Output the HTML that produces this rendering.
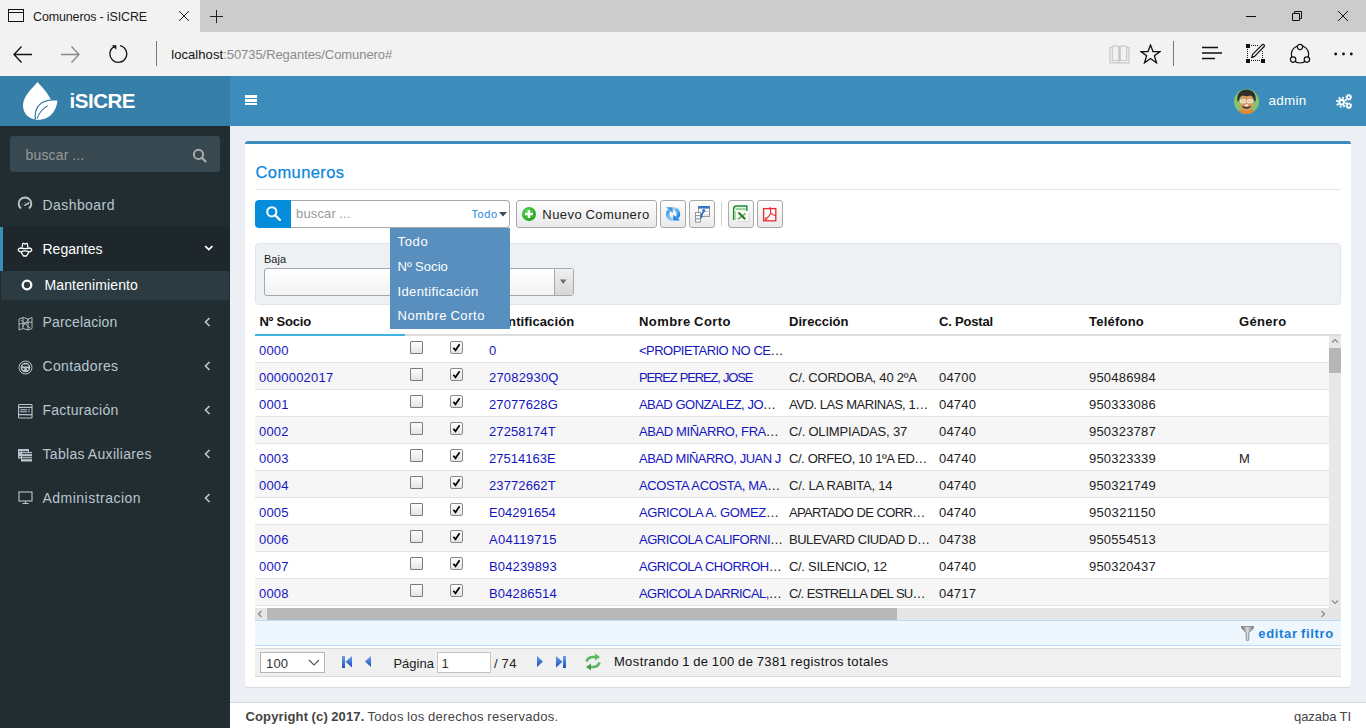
<!DOCTYPE html>
<html><head><meta charset="utf-8"><title>Comuneros - iSICRE</title><style>
*{box-sizing:border-box;margin:0;padding:0}
html,body{width:1366px;height:728px;overflow:hidden;font-family:"Liberation Sans",sans-serif;background:#ecf0f5;position:relative}
.a{position:absolute}
.t{position:absolute;white-space:nowrap}
svg{display:block;position:absolute}
.cb{position:absolute;width:13px;height:13px;border:1px solid #8a8a8a;border-radius:2px;background:linear-gradient(#fdfdfd,#e4e4e4)}
.btn{position:absolute;height:28px;top:200px;border:1px solid #a9a9a9;border-radius:3px;background:linear-gradient(#fefefe,#e9e9e9)}
</style></head><body>
<div class="a" style="left:0;top:0;width:1366px;height:32px;background:#cccccc"></div>
<div class="a" style="left:0;top:0;width:200px;height:32px;background:#f2f2f2"></div>
<div class="a" style="left:0;top:32px;width:1366px;height:44px;background:#f2f2f2"></div>
<div class="a" style="left:8px;top:9px;width:16px;height:13px;border:1.3px solid #111"></div>
<div class="a" style="left:8px;top:12px;width:16px;height:1.3px;background:#111"></div>
<svg style="left:179px;top:11px" width="10" height="10" viewBox="0 0 10 10"><path d="M0 0L10 10M10 0L0 10" stroke="#222" stroke-width="1"/></svg>
<div class="a" style="left:216px;top:10px;width:1px;height:13px;background:#222"></div><div class="a" style="left:210px;top:16px;width:13px;height:1px;background:#222"></div>
<div class="a" style="left:1246px;top:16px;width:10px;height:1px;background:#111"></div>
<svg style="left:1292px;top:11px" width="10" height="10" viewBox="0 0 10 10"><path d="M0.5 2.5H7.5V9.5H0.5Z M2.5 2.5V0.5H9.5V7.5H7.5" fill="none" stroke="#111" stroke-width="1"/></svg>
<svg style="left:1338px;top:11px" width="10" height="10" viewBox="0 0 10 10"><path d="M0 0L10 10M10 0L0 10" stroke="#111" stroke-width="1"/></svg>
<svg style="left:13px;top:46px" width="19" height="17" viewBox="0 0 19 17"><path d="M8.5 0.5L1 8.5L8.5 16.5M1 8.5H19" fill="none" stroke="#111" stroke-width="1.3"/></svg>
<svg style="left:61px;top:46px" width="19" height="17" viewBox="0 0 19 17"><path d="M10.5 0.5L18 8.5L10.5 16.5M0 8.5H18" fill="none" stroke="#888" stroke-width="1.3"/></svg>
<svg style="left:108px;top:44px" width="20" height="20" viewBox="0 0 20 20"><path d="M12 1.7A8.4 8.4 0 1 1 6.2 2.6" fill="none" stroke="#111" stroke-width="1.3"/><path d="M3.8 1.2H8.3V5.7Z" fill="#111"/></svg>
<div class="a" style="left:156px;top:41px;width:1px;height:25px;background:#777"></div>
<svg style="left:1109px;top:45px" width="21" height="19" viewBox="0 0 21 19"><g fill="none" stroke="#c9c9c9" stroke-width="1.2"><path d="M0.9 2.6V17.8H20V2.6H18.2"/><path d="M0.9 2.6H2.9"/><path d="M3.3 15.5V1.3Q6.5 0.6 9.8 1.3V15.5Z"/><path d="M11.2 15.5V1.3Q14.5 0.6 17.7 1.3V15.5Z"/><path d="M10.5 1.5V18"/></g></svg>
<svg style="left:1140px;top:44px" width="21" height="20" viewBox="0 0 21 20"><path d="M10.5 1L13 7.6H20L14.4 11.8L16.5 18.8L10.5 14.5L4.5 18.8L6.6 11.8L1 7.6H8Z" fill="none" stroke="#111" stroke-width="1.3"/></svg>
<div class="a" style="left:1173px;top:41px;width:1px;height:25px;background:#777"></div>
<svg style="left:1201px;top:46px" width="22" height="14" viewBox="0 0 22 14"><path d="M1 1.5H17M1 7H21M1 12.5H14" stroke="#111" stroke-width="1.3"/></svg>
<svg style="left:1245px;top:43px" width="22" height="21" viewBox="0 0 22 21"><g fill="#111"><rect x="1" y="1" width="4" height="4"/><rect x="1" y="16" width="4" height="4"/><rect x="16" y="16" width="4" height="4"/></g><g stroke="#111" stroke-width="1" stroke-dasharray="1 1"><path d="M6 2.5H13.5"/><path d="M2.5 6V15"/><path d="M6 17.5H15"/><path d="M17.5 8V15"/></g><path d="M6.6 14.6L7.6 11.4L17.3 1.7Q18.3 1 19.1 1.8Q19.9 2.6 19.2 3.5L9.6 13.4Z" fill="none" stroke="#111" stroke-width="1.2" stroke-linejoin="round"/></svg>
<svg style="left:1289px;top:43px" width="22" height="21" viewBox="0 0 22 21"><circle cx="11" cy="11.3" r="8.7" fill="none" stroke="#111" stroke-width="1.2"/><circle cx="11" cy="4" r="2.7" fill="#f2f2f2" stroke="#111" stroke-width="1.2"/><circle cx="4.1" cy="16.6" r="2.7" fill="#f2f2f2" stroke="#111" stroke-width="1.2"/><circle cx="17.9" cy="16.6" r="2.7" fill="#f2f2f2" stroke="#111" stroke-width="1.2"/></svg>
<svg style="left:1334px;top:52px" width="19" height="4"><circle cx="1.7" cy="2" r="1.4" fill="#111"/><circle cx="9.5" cy="2" r="1.4" fill="#111"/><circle cx="17.3" cy="2" r="1.4" fill="#111"/></svg>
<div class="t" style="left:33.00px;top:11.12px;font-size:12.5px;line-height:12.5px;color:#1a1a1a;letter-spacing:-0.141px;word-spacing:-0.084px">Comuneros - iSICRE</div>
<div class="t" style="left:171.20px;top:47.50px;font-size:13px;line-height:13px;color:#111;letter-spacing:0.076px">localhost</div>
<div class="t" style="left:223.20px;top:47.50px;font-size:13px;line-height:13px;color:#8a8a8a;letter-spacing:-0.062px">:50735/Regantes/Comunero#</div>
<div class="a" style="left:0;top:76px;width:230px;height:50px;background:#367fa9"></div>
<div class="a" style="left:230px;top:76px;width:1136px;height:50px;background:#3c8dbc"></div>
<svg style="left:18px;top:78px" width="44" height="44" viewBox="0 0 44 44">
<path d="M19.5 4C15 9.5 5 18 5 27.5C5 36 11.5 41.5 19 41.5L25 38L33 22C30 15 24 9 19.5 4Z" fill="#fff"/>
<path d="M17.8 41.8C16.8 33 20.5 24.3 30.5 22.5L39.3 22.5C39 31 33 41.8 20 41.8Z" fill="#fff"/>
<path d="M17.4 41.5C16.3 32.5 19.8 24.2 30.3 22.3L33 22.1" fill="none" stroke="#367fa9" stroke-width="1.3"/>
<path d="M19 40.8C21.5 34 25 30 29.8 27.8" fill="none" stroke="#367fa9" stroke-width="1.1"/>
</svg>
<div class="a" style="left:245px;top:95.3px;width:11.5px;height:2.6px;background:#fff"></div>
<div class="a" style="left:245px;top:99.1px;width:11.5px;height:2.6px;background:#fff"></div>
<div class="a" style="left:245px;top:102.8px;width:11.5px;height:2.6px;background:#fff"></div>
<svg style="left:1234px;top:89px" width="25" height="25" viewBox="0 0 25 25">
<defs><clipPath id="cc"><circle cx="12.5" cy="12.5" r="12.5"/></clipPath></defs>
<g clip-path="url(#cc)">
<rect width="25" height="25" fill="#86c46a"/>
<path d="M2 25Q3 20.5 12.5 20Q22 20.5 23 25Z" fill="#e8862e"/>
<ellipse cx="12.5" cy="13.5" rx="7" ry="8.5" fill="#d49b63"/>
<path d="M3.5 13Q2 1 12.5 0.5Q23 1 21.5 13L19.8 11Q19.5 7 16 6.5Q12.5 8 9 6.5Q5.5 7 5.2 11Z" fill="#2e2e2e"/>
<rect x="6.5" y="10.8" width="5" height="3" rx="0.6" fill="#e9c9a0" stroke="#f4f4f4" stroke-width="0.9"/>
<rect x="13.5" y="10.8" width="5" height="3" rx="0.6" fill="#e9c9a0" stroke="#f4f4f4" stroke-width="0.9"/>
<path d="M8.5 17.5Q12.5 20.5 16.5 17.5" stroke="#2a2a2a" stroke-width="1.4" fill="none"/>
<rect x="11.3" y="15.5" width="2.4" height="1.6" fill="#fff"/>
</g></svg>
<svg style="left:1336px;top:94px" width="16" height="15" viewBox="0 0 16 15">
<circle cx="5.6" cy="8.2" r="3.4" fill="#fff"/>
<circle cx="5.6" cy="8.2" r="4.6" fill="none" stroke="#fff" stroke-width="2" stroke-dasharray="1.8 1.8"/>
<circle cx="5.6" cy="8.2" r="1.3" fill="#3c8dbc"/>
<circle cx="12.8" cy="3.3" r="1.9" fill="none" stroke="#fff" stroke-width="1.6"/>
<circle cx="12.8" cy="3.3" r="2.7" fill="none" stroke="#fff" stroke-width="1.2" stroke-dasharray="1.1 1"/>
<circle cx="12.8" cy="11.7" r="1.9" fill="none" stroke="#fff" stroke-width="1.6"/>
<circle cx="12.8" cy="11.7" r="2.7" fill="none" stroke="#fff" stroke-width="1.2" stroke-dasharray="1.1 1"/>
</svg>
<div class="t" style="left:69.50px;top:90.65px;font-size:20.5px;line-height:20.5px;color:#fff;font-weight:bold;letter-spacing:-0.477px">iSICRE</div>
<div class="t" style="left:1268.50px;top:94.17px;font-size:13.5px;line-height:13.5px;color:#fff;letter-spacing:0.244px">admin</div>
<div class="a" style="left:0;top:126px;width:230px;height:602px;background:#222d32"></div>
<div class="a" style="left:10px;top:136px;width:210px;height:36px;background:#374850;border-radius:3px"></div>
<svg style="left:190px;top:146px" width="18" height="18" viewBox="0 0 18 18"><circle cx="8.5" cy="8.4" r="4.6" fill="none" stroke="#aaa" stroke-width="2"/><path d="M11.8 11.8L15.6 15.4" stroke="#aaa" stroke-width="2.2" stroke-linecap="round"/></svg>
<svg style="left:17px;top:196px" width="16" height="16" viewBox="0 0 16 16"><path d="M4 12.6A6.3 6.3 0 1 1 12 12.6" fill="none" stroke="#b8c7ce" stroke-width="1.9"/><path d="M8 6.2V7M4.8 8.4H5.6M10.6 8.4H11.4" stroke="#b8c7ce" stroke-width="0.8"/><path d="M7.8 9.3L11.8 6.8" stroke="#b8c7ce" stroke-width="1.5" stroke-linecap="round"/></svg>
<div class="a" style="left:0;top:227px;width:230px;height:44px;background:#1e282c"></div>
<div class="a" style="left:0;top:227px;width:3px;height:44px;background:#3c8dbc"></div>
<svg style="left:17px;top:241px" width="16" height="16" viewBox="0 0 16 16"><g fill="none" stroke="#fff" stroke-width="1.3" stroke-linejoin="round"><path d="M5.2 6.5L5.6 3Q6.2 1.8 7.2 2.6L8 3.2L8.8 2.6Q9.8 1.8 10.4 3L10.8 6.5"/><path d="M3.5 7Q1 7.5 1.3 9.2Q1.8 10.8 4 10.8L6.5 15H9.5L12 10.8Q14.2 10.8 14.7 9.2Q15 7.5 12.5 7Q8 8.2 3.5 7Z"/><path d="M4 10.8Q8 9 12 10.8"/></g></svg>
<svg style="left:203.5px;top:244.5px" width="10" height="7" viewBox="0 0 10 7"><path d="M1.2 1.2L4.8 4.6L8.4 1.2" fill="none" stroke="#fff" stroke-width="1.8"/></svg>
<div class="a" style="left:1px;top:271px;width:228px;height:29px;background:#2c3b41"></div>
<svg style="left:20px;top:278px" width="14" height="14" viewBox="0 0 14 14"><circle cx="7" cy="7" r="4.3" fill="none" stroke="#fff" stroke-width="2.3"/></svg>
<div class="t" style="left:25.50px;top:147.85px;font-size:14px;line-height:14px;color:#999;letter-spacing:0.165px;word-spacing:-0.417px">buscar ...</div>
<div class="t" style="left:42.50px;top:197.85px;font-size:14px;line-height:14px;color:#b8c7ce;letter-spacing:0.431px">Dashboard</div>
<div class="t" style="left:42.50px;top:241.85px;font-size:14px;line-height:14px;color:#fff;letter-spacing:0.012px">Regantes</div>
<div class="t" style="left:44.50px;top:278.15px;font-size:14px;line-height:14px;color:#fff;letter-spacing:0.129px">Mantenimiento</div>
<svg style="left:17.5px;top:316px" width="15" height="15" viewBox="0 0 15 15"><path d="M1 3L5 1.5L10 3L14 1.5V12.5L10 14L5 12.5L1 14Z M5 1.5V12.5M10 3V14 M1 8L14 6 M3 4L12 12 M11 3L4 11" fill="none" stroke="#b8c7ce" stroke-width="0.9"/></svg><svg style="left:204px;top:316.5px" width="7" height="10" viewBox="0 0 7 10"><path d="M5.5 1L1.5 5L5.5 9" fill="none" stroke="#b8c7ce" stroke-width="1.7"/></svg>
<div class="t" style="left:42.50px;top:314.95px;font-size:14px;line-height:14px;color:#b8c7ce;letter-spacing:0.170px">Parcelacion</div>
<svg style="left:17.5px;top:360px" width="15" height="15" viewBox="0 0 15 15"><circle cx="7.5" cy="7.5" r="6.5" fill="none" stroke="#b8c7ce" stroke-width="1"/><circle cx="7.5" cy="7.5" r="4.8" fill="#b8c7ce"/><rect x="4.5" y="4.5" width="6" height="2" fill="#222d32"/><circle cx="5.5" cy="9" r="1" fill="#222d32"/><circle cx="9.5" cy="9" r="1" fill="#222d32"/></svg><svg style="left:204px;top:360.5px" width="7" height="10" viewBox="0 0 7 10"><path d="M5.5 1L1.5 5L5.5 9" fill="none" stroke="#b8c7ce" stroke-width="1.7"/></svg>
<div class="t" style="left:42.50px;top:358.95px;font-size:14px;line-height:14px;color:#b8c7ce;letter-spacing:0.350px">Contadores</div>
<svg style="left:17.5px;top:404px" width="15" height="15" viewBox="0 0 15 15"><rect x="0.6" y="0.5" width="13.4" height="13.5" rx="0.8" fill="none" stroke="#b8c7ce" stroke-width="1.1"/><path d="M0.6 3.4H14M0.6 10.6H9.5Q10.5 11.5 11.5 10.6H14M2.2 5.7H9.2M10.2 5.7H11.8M2.2 7.7H9.2M10.2 7.7H11.8" stroke="#b8c7ce" stroke-width="1.1"/></svg><svg style="left:204px;top:404.5px" width="7" height="10" viewBox="0 0 7 10"><path d="M5.5 1L1.5 5L5.5 9" fill="none" stroke="#b8c7ce" stroke-width="1.7"/></svg>
<div class="t" style="left:42.50px;top:402.95px;font-size:14px;line-height:14px;color:#b8c7ce;letter-spacing:0.256px">Facturación</div>
<svg style="left:17.5px;top:449px" width="15" height="15" viewBox="0 0 15 15"><rect x="0" y="0" width="11" height="9.5" fill="#b8c7ce"/><rect x="3" y="3" width="11" height="9.5" fill="#b8c7ce"/><path d="M1.2 2.6H2.9M4.1 2.6H9.9M1.2 7.7H2.9M4.1 4.6H14M4.1 7.7H14M4.1 9.7H14" stroke="#222d32" stroke-width="0.9"/><path d="M11 3V0M3 9.5V12.5" stroke="#222d32" stroke-width="0"/></svg><svg style="left:204px;top:448.5px" width="7" height="10" viewBox="0 0 7 10"><path d="M5.5 1L1.5 5L5.5 9" fill="none" stroke="#b8c7ce" stroke-width="1.7"/></svg>
<div class="t" style="left:42.50px;top:446.95px;font-size:14px;line-height:14px;color:#b8c7ce;letter-spacing:0.326px;word-spacing:-0.578px">Tablas Auxiliares</div>
<svg style="left:17.5px;top:490.5px" width="15" height="15" viewBox="0 0 15 15"><rect x="1" y="1" width="13" height="9" fill="none" stroke="#b8c7ce" stroke-width="1.1"/><path d="M7.5 10V12M4.5 12.5H10.5" stroke="#b8c7ce" stroke-width="1.1"/></svg><svg style="left:204px;top:492.5px" width="7" height="10" viewBox="0 0 7 10"><path d="M5.5 1L1.5 5L5.5 9" fill="none" stroke="#b8c7ce" stroke-width="1.7"/></svg>
<div class="t" style="left:42.50px;top:490.95px;font-size:14px;line-height:14px;color:#b8c7ce;letter-spacing:0.477px">Administracion</div>
<div class="a" style="left:245px;top:141px;width:1106px;height:546px;background:#fff;border-top:3px solid #3c8dbc;border-radius:3px;box-shadow:0 1px 1px rgba(0,0,0,.1)"></div>
<div class="a" style="left:255px;top:189px;width:1086px;height:1px;background:#e6e6e6"></div>
<div class="t" style="left:255.50px;top:164.03px;font-size:16.5px;line-height:16.5px;color:#0c87db;letter-spacing:0.411px;-webkit-text-stroke:0.25px #0c87db">Comuneros</div>
<div class="a" style="left:291px;top:200px;width:219px;height:28px;background:#fff;border:1px solid #a8a8a8;border-left:0;border-radius:0 4px 4px 0"></div>
<div class="a" style="left:255px;top:200px;width:36px;height:28px;background:#048dda;border-radius:4px 0 0 4px"></div>
<svg style="left:265px;top:205px" width="17" height="17" viewBox="0 0 17 17"><circle cx="6.8" cy="6.8" r="4.6" fill="none" stroke="#fff" stroke-width="2"/><path d="M10 10L14.8 14.8" stroke="#fff" stroke-width="2.4" stroke-linecap="round"/></svg>
<svg style="left:499px;top:212px" width="8" height="5" viewBox="0 0 8 5"><path d="M0 0H8L4 4.5Z" fill="#3d4a5a"/></svg>
<div class="t" style="left:296.00px;top:207.10px;font-size:13px;line-height:13px;color:#9a9a9a;letter-spacing:0.155px;word-spacing:-0.389px">buscar ...</div>
<div class="t" style="left:471.50px;top:208.69px;font-size:11px;line-height:11px;color:#1a8ae0;letter-spacing:0.572px">Todo</div>
<div class="btn" style="left:516px;width:141px"></div>
<svg style="left:521px;top:206px" width="16" height="16" viewBox="0 0 16 16"><defs><radialGradient id="gg" cx="0.4" cy="0.35" r="0.7"><stop offset="0" stop-color="#5fd85f"/><stop offset="1" stop-color="#17a417"/></radialGradient></defs><circle cx="8" cy="8" r="7" fill="url(#gg)"/><path d="M8 4V12M4 8H12" stroke="#fff" stroke-width="2.4"/></svg>
<div class="btn" style="left:660px;width:26px"></div>
<div class="btn" style="left:689px;width:26px"></div>
<div class="a" style="left:721px;top:202px;width:1px;height:24px;background:#d0d0d0"></div>
<div class="btn" style="left:728px;width:26px"></div>
<div class="btn" style="left:757px;width:26px"></div>
<svg style="left:662px;top:203px" width="22" height="22" viewBox="0 0 22 22"><defs><linearGradient id="rl" x1="0" y1="0" x2="1" y2="1"><stop offset="0" stop-color="#3f9be6"/><stop offset=".5" stop-color="#7cc4f0"/><stop offset="1" stop-color="#9ad3f5"/></linearGradient><linearGradient id="rr" x1="0" y1="0" x2="1" y2="1"><stop offset="0" stop-color="#a8d8f5"/><stop offset=".6" stop-color="#4aa8ec"/><stop offset="1" stop-color="#1a86e6"/></linearGradient></defs>
<path d="M10.8 16.6A5.4 5.4 0 0 1 7.3 7.4" fill="none" stroke="url(#rl)" stroke-width="3.4"/><path d="M4 4.2H10.8V10Z" fill="#3d97e2"/>
<path d="M11.3 5.6A5.4 5.4 0 0 1 14.9 14.7" fill="none" stroke="url(#rr)" stroke-width="3.4"/><path d="M11.2 11.8V17.6H18Z" fill="#1f88e4"/></svg>
<svg style="left:694px;top:205px" width="17" height="18" viewBox="0 0 17 18"><rect x="4.5" y="1.5" width="11" height="10" fill="#fff" stroke="#999"/><rect x="4" y="1" width="12" height="2.6" fill="#3a78c6"/><path d="M10 10H15M12 6.5H15" stroke="#bbb" stroke-width="0.8"/><g fill="#fff" stroke="#8d8d8d" stroke-width="0.9"><rect x="1.5" y="7.5" width="5" height="3.2"/><rect x="1.5" y="10.7" width="5" height="3.2"/><rect x="1.5" y="13.9" width="5" height="3.2"/></g><path d="M7.2 13.2Q7.6 8.2 9.8 6.6" fill="none" stroke="#2f6fbd" stroke-width="1.9"/><path d="M7.6 5.8L10.2 3.4L12 7.2Z" fill="#2f6fbd"/></svg>
<svg style="left:732px;top:205px" width="19" height="18" viewBox="0 0 19 18"><path d="M1.6 15V4.2Q1.6 1.2 4.6 1H14.8V6" fill="none" stroke="#1d8a2c" stroke-width="1.4"/><rect x="3.6" y="2.8" width="10" height="2.3" fill="#9fd49f"/><path d="M3.2 15V6" stroke="#7fc47f" stroke-width="0.8"/><rect x="5.5" y="7" width="12" height="10" fill="#d8d8d8"/><rect x="4.5" y="6" width="12" height="10" fill="#fdfdfd"/><path d="M5.8 14.3L13.5 8.5" stroke="#6cc06c" stroke-width="2"/><path d="M6.5 7.5L13.2 14.3" stroke="#2a7d1f" stroke-width="2.2"/></svg>
<svg style="left:761px;top:205px" width="18" height="18" viewBox="0 0 18 18"><rect x="2.6" y="3.6" width="12.2" height="12.2" fill="#f6fafa" stroke="#e8282c" stroke-width="1.3"/><circle cx="9.2" cy="3.3" r="1.1" fill="#e8262a"/><path d="M9.2 3.5Q9.3 6 10 8Q11 10 14.6 10.6M9.9 8Q8.2 12 4.4 14.2" fill="none" stroke="#ea2a2e" stroke-width="1.1"/><circle cx="4.8" cy="13.8" r="1" fill="none" stroke="#ea2a2e" stroke-width="0.9"/></svg>
<div class="t" style="left:542.30px;top:208.10px;font-size:13px;line-height:13px;color:#222;letter-spacing:0.440px;word-spacing:-0.674px">Nuevo Comunero</div>
<div class="a" style="left:255px;top:243px;width:1086px;height:62px;background:#eef1f4;border:1px solid #e1e5ea;border-radius:4px"></div>
<div class="a" style="left:264px;top:268px;width:310px;height:28px;background:linear-gradient(#fff,#f3f3f3);border:1px solid #a8a8a8;border-radius:3px"></div>
<div class="a" style="left:554px;top:269px;width:19px;height:26px;background:linear-gradient(#f0f0f0,#d6d6d6);border-left:1px solid #a8a8a8;border-radius:0 2px 2px 0"></div>
<svg style="left:560px;top:279px" width="7" height="6" viewBox="0 0 7 6"><path d="M0 0.5H6.5L3.25 5Z" fill="#707070"/></svg>
<div class="t" style="left:264.00px;top:253.69px;font-size:11px;line-height:11px;color:#222;letter-spacing:0.028px">Baja</div>
<div class="a" style="left:255px;top:334px;width:1086px;height:2px;background:#dcdcdc"></div>
<div class="a" style="left:255px;top:334px;width:150px;height:2px;background:#3fb2e2"></div>
<div class="t" style="left:259.40px;top:315.00px;font-size:13px;line-height:13px;color:#111;font-weight:bold;letter-spacing:-0.203px;word-spacing:-0.031px">Nº Socio</div>
<div class="t" style="left:489.00px;top:315.00px;font-size:13px;line-height:13px;color:#111;font-weight:bold;letter-spacing:0.102px">Identificación</div>
<div class="t" style="left:639.00px;top:315.00px;font-size:13px;line-height:13px;color:#111;font-weight:bold;letter-spacing:0.428px;word-spacing:-0.662px">Nombre Corto</div>
<div class="t" style="left:789.00px;top:315.00px;font-size:13px;line-height:13px;color:#111;font-weight:bold;letter-spacing:0.028px">Dirección</div>
<div class="t" style="left:939.00px;top:315.00px;font-size:13px;line-height:13px;color:#111;font-weight:bold;letter-spacing:-0.174px;word-spacing:-0.060px">C. Postal</div>
<div class="t" style="left:1089.00px;top:315.00px;font-size:13px;line-height:13px;color:#111;font-weight:bold;letter-spacing:0.225px">Teléfono</div>
<div class="t" style="left:1239.00px;top:315.00px;font-size:13px;line-height:13px;color:#111;font-weight:bold;letter-spacing:0.322px">Género</div>
<div class="a" style="left:255px;top:336px;width:1074px;height:27px;background:#fff;border-bottom:1px solid #e3e3e3"></div>
<div class="cb" style="left:410px;top:341px;border-radius:1px;border-color:#7a7a7a"></div><div class="cb" style="left:450px;top:341px"></div><svg style="left:451px;top:342px" width="11" height="11" viewBox="0 0 11 11"><path d="M2.4 5.8L4.5 8.3L8.6 2.2" fill="none" stroke="#000" stroke-width="1.7"/></svg>
<div class="t" style="left:259.00px;top:343.50px;font-size:13px;line-height:13px;color:#1515c0;letter-spacing:0.203px">0000</div>
<div class="t" style="left:489.00px;top:343.50px;font-size:13px;line-height:13px;color:#1515c0;letter-spacing:0.199px">0</div>
<div class="t" style="left:639.00px;top:343.50px;font-size:13px;line-height:13px;color:#1515c0;letter-spacing:-0.522px;word-spacing:0.288px">&lt;PROPIETARIO NO CE</div>
<div class="t" style="left:770.45px;top:343.50px;font-size:13px;line-height:13px;color:#222;letter-spacing:-2.603px">…</div>
<div class="a" style="left:255px;top:363px;width:1074px;height:27px;background:#f6f6f6;border-bottom:1px solid #e3e3e3"></div>
<div class="cb" style="left:410px;top:368px;border-radius:1px;border-color:#7a7a7a"></div><div class="cb" style="left:450px;top:368px"></div><svg style="left:451px;top:369px" width="11" height="11" viewBox="0 0 11 11"><path d="M2.4 5.8L4.5 8.3L8.6 2.2" fill="none" stroke="#000" stroke-width="1.7"/></svg>
<div class="t" style="left:259.00px;top:370.50px;font-size:13px;line-height:13px;color:#1515c0;letter-spacing:0.202px">0000002017</div>
<div class="t" style="left:489.00px;top:370.50px;font-size:13px;line-height:13px;color:#1515c0;letter-spacing:0.182px">27082930Q</div>
<div class="t" style="left:639.00px;top:370.50px;font-size:13px;line-height:13px;color:#1515c0;letter-spacing:-1.193px;word-spacing:0.959px">PEREZ PEREZ, JOSE</div>
<div class="t" style="left:789.00px;top:370.50px;font-size:13px;line-height:13px;color:#222;letter-spacing:-0.213px;word-spacing:-0.021px">C/. CORDOBA, 40 2ºA</div>
<div class="t" style="left:939.00px;top:370.50px;font-size:13px;line-height:13px;color:#222;letter-spacing:0.202px">04700</div>
<div class="t" style="left:1089.00px;top:370.50px;font-size:13px;line-height:13px;color:#222;letter-spacing:0.202px">950486984</div>
<div class="a" style="left:255px;top:390px;width:1074px;height:27px;background:#fff;border-bottom:1px solid #e3e3e3"></div>
<div class="cb" style="left:410px;top:395px;border-radius:1px;border-color:#7a7a7a"></div><div class="cb" style="left:450px;top:395px"></div><svg style="left:451px;top:396px" width="11" height="11" viewBox="0 0 11 11"><path d="M2.4 5.8L4.5 8.3L8.6 2.2" fill="none" stroke="#000" stroke-width="1.7"/></svg>
<div class="t" style="left:259.00px;top:397.50px;font-size:13px;line-height:13px;color:#1515c0;letter-spacing:0.203px">0001</div>
<div class="t" style="left:489.00px;top:397.50px;font-size:13px;line-height:13px;color:#1515c0;letter-spacing:0.108px">27077628G</div>
<div class="t" style="left:639.00px;top:397.50px;font-size:13px;line-height:13px;color:#1515c0;letter-spacing:-0.560px;word-spacing:0.326px">ABAD GONZALEZ, JO</div>
<div class="t" style="left:763.06px;top:397.50px;font-size:13px;line-height:13px;color:#222;letter-spacing:-2.603px">…</div>
<div class="t" style="left:789.00px;top:397.50px;font-size:13px;line-height:13px;color:#222;letter-spacing:-0.490px;word-spacing:0.256px">AVD. LAS MARINAS, 1…</div>
<div class="t" style="left:939.00px;top:397.50px;font-size:13px;line-height:13px;color:#222;letter-spacing:0.202px">04740</div>
<div class="t" style="left:1089.00px;top:397.50px;font-size:13px;line-height:13px;color:#222;letter-spacing:0.202px">950333086</div>
<div class="a" style="left:255px;top:417px;width:1074px;height:27px;background:#f6f6f6;border-bottom:1px solid #e3e3e3"></div>
<div class="cb" style="left:410px;top:422px;border-radius:1px;border-color:#7a7a7a"></div><div class="cb" style="left:450px;top:422px"></div><svg style="left:451px;top:423px" width="11" height="11" viewBox="0 0 11 11"><path d="M2.4 5.8L4.5 8.3L8.6 2.2" fill="none" stroke="#000" stroke-width="1.7"/></svg>
<div class="t" style="left:259.00px;top:424.50px;font-size:13px;line-height:13px;color:#1515c0;letter-spacing:0.203px">0002</div>
<div class="t" style="left:489.00px;top:424.50px;font-size:13px;line-height:13px;color:#1515c0;letter-spacing:0.102px">27258174T</div>
<div class="t" style="left:639.00px;top:424.50px;font-size:13px;line-height:13px;color:#1515c0;letter-spacing:-0.420px;word-spacing:0.186px">ABAD MIÑARRO, FRA</div>
<div class="t" style="left:765.85px;top:424.50px;font-size:13px;line-height:13px;color:#222;letter-spacing:-2.603px">…</div>
<div class="t" style="left:789.00px;top:424.50px;font-size:13px;line-height:13px;color:#222;letter-spacing:-0.182px;word-spacing:-0.052px">C/. OLIMPIADAS, 37</div>
<div class="t" style="left:939.00px;top:424.50px;font-size:13px;line-height:13px;color:#222;letter-spacing:0.202px">04740</div>
<div class="t" style="left:1089.00px;top:424.50px;font-size:13px;line-height:13px;color:#222;letter-spacing:0.202px">950323787</div>
<div class="a" style="left:255px;top:444px;width:1074px;height:27px;background:#fff;border-bottom:1px solid #e3e3e3"></div>
<div class="cb" style="left:410px;top:449px;border-radius:1px;border-color:#7a7a7a"></div><div class="cb" style="left:450px;top:449px"></div><svg style="left:451px;top:450px" width="11" height="11" viewBox="0 0 11 11"><path d="M2.4 5.8L4.5 8.3L8.6 2.2" fill="none" stroke="#000" stroke-width="1.7"/></svg>
<div class="t" style="left:259.00px;top:451.50px;font-size:13px;line-height:13px;color:#1515c0;letter-spacing:0.203px">0003</div>
<div class="t" style="left:489.00px;top:451.50px;font-size:13px;line-height:13px;color:#1515c0;letter-spacing:0.020px">27514163E</div>
<div class="t" style="left:639.00px;top:451.50px;font-size:13px;line-height:13px;color:#1515c0;letter-spacing:-0.539px;word-spacing:0.305px">ABAD MIÑARRO, JUAN J</div>
<div class="t" style="left:789.00px;top:451.50px;font-size:13px;line-height:13px;color:#222;letter-spacing:-0.443px;word-spacing:0.209px">C/. ORFEO, 10 1ºA ED…</div>
<div class="t" style="left:939.00px;top:451.50px;font-size:13px;line-height:13px;color:#222;letter-spacing:0.202px">04740</div>
<div class="t" style="left:1089.00px;top:451.50px;font-size:13px;line-height:13px;color:#222;letter-spacing:0.202px">950323339</div>
<div class="t" style="left:1239.00px;top:451.50px;font-size:13px;line-height:13px;color:#222;letter-spacing:0.893px">M</div>
<div class="a" style="left:255px;top:471px;width:1074px;height:27px;background:#f6f6f6;border-bottom:1px solid #e3e3e3"></div>
<div class="cb" style="left:410px;top:476px;border-radius:1px;border-color:#7a7a7a"></div><div class="cb" style="left:450px;top:476px"></div><svg style="left:451px;top:477px" width="11" height="11" viewBox="0 0 11 11"><path d="M2.4 5.8L4.5 8.3L8.6 2.2" fill="none" stroke="#000" stroke-width="1.7"/></svg>
<div class="t" style="left:259.00px;top:478.50px;font-size:13px;line-height:13px;color:#1515c0;letter-spacing:0.203px">0004</div>
<div class="t" style="left:489.00px;top:478.50px;font-size:13px;line-height:13px;color:#1515c0;letter-spacing:0.102px">23772662T</div>
<div class="t" style="left:639.00px;top:478.50px;font-size:13px;line-height:13px;color:#1515c0;letter-spacing:-0.349px;word-spacing:0.115px">ACOSTA ACOSTA, MA</div>
<div class="t" style="left:767.19px;top:478.50px;font-size:13px;line-height:13px;color:#222;letter-spacing:-2.603px">…</div>
<div class="t" style="left:789.00px;top:478.50px;font-size:13px;line-height:13px;color:#222;letter-spacing:-0.189px;word-spacing:-0.045px">C/. LA RABITA, 14</div>
<div class="t" style="left:939.00px;top:478.50px;font-size:13px;line-height:13px;color:#222;letter-spacing:0.202px">04740</div>
<div class="t" style="left:1089.00px;top:478.50px;font-size:13px;line-height:13px;color:#222;letter-spacing:0.202px">950321749</div>
<div class="a" style="left:255px;top:498px;width:1074px;height:27px;background:#fff;border-bottom:1px solid #e3e3e3"></div>
<div class="cb" style="left:410px;top:503px;border-radius:1px;border-color:#7a7a7a"></div><div class="cb" style="left:450px;top:503px"></div><svg style="left:451px;top:504px" width="11" height="11" viewBox="0 0 11 11"><path d="M2.4 5.8L4.5 8.3L8.6 2.2" fill="none" stroke="#000" stroke-width="1.7"/></svg>
<div class="t" style="left:259.00px;top:505.50px;font-size:13px;line-height:13px;color:#1515c0;letter-spacing:0.203px">0005</div>
<div class="t" style="left:489.00px;top:505.50px;font-size:13px;line-height:13px;color:#1515c0;letter-spacing:0.020px">E04291654</div>
<div class="t" style="left:639.00px;top:505.50px;font-size:13px;line-height:13px;color:#1515c0;letter-spacing:-0.368px;word-spacing:0.134px">AGRICOLA A. GOMEZ</div>
<div class="t" style="left:765.93px;top:505.50px;font-size:13px;line-height:13px;color:#222;letter-spacing:-2.603px">…</div>
<div class="t" style="left:789.00px;top:505.50px;font-size:13px;line-height:13px;color:#222;letter-spacing:-0.655px;word-spacing:0.421px">APARTADO DE CORR…</div>
<div class="t" style="left:939.00px;top:505.50px;font-size:13px;line-height:13px;color:#222;letter-spacing:0.202px">04740</div>
<div class="t" style="left:1089.00px;top:505.50px;font-size:13px;line-height:13px;color:#222;letter-spacing:0.310px">950321150</div>
<div class="a" style="left:255px;top:525px;width:1074px;height:27px;background:#f6f6f6;border-bottom:1px solid #e3e3e3"></div>
<div class="cb" style="left:410px;top:530px;border-radius:1px;border-color:#7a7a7a"></div><div class="cb" style="left:450px;top:530px"></div><svg style="left:451px;top:531px" width="11" height="11" viewBox="0 0 11 11"><path d="M2.4 5.8L4.5 8.3L8.6 2.2" fill="none" stroke="#000" stroke-width="1.7"/></svg>
<div class="t" style="left:259.00px;top:532.50px;font-size:13px;line-height:13px;color:#1515c0;letter-spacing:0.203px">0006</div>
<div class="t" style="left:489.00px;top:532.50px;font-size:13px;line-height:13px;color:#1515c0;letter-spacing:0.238px">A04119715</div>
<div class="t" style="left:639.00px;top:532.50px;font-size:13px;line-height:13px;color:#1515c0;letter-spacing:-0.474px;word-spacing:0.240px">AGRICOLA CALIFORNI</div>
<div class="t" style="left:770.12px;top:532.50px;font-size:13px;line-height:13px;color:#222;letter-spacing:-2.603px">…</div>
<div class="t" style="left:789.00px;top:532.50px;font-size:13px;line-height:13px;color:#222;letter-spacing:-0.470px;word-spacing:0.236px">BULEVARD CIUDAD D…</div>
<div class="t" style="left:939.00px;top:532.50px;font-size:13px;line-height:13px;color:#222;letter-spacing:0.202px">04738</div>
<div class="t" style="left:1089.00px;top:532.50px;font-size:13px;line-height:13px;color:#222;letter-spacing:0.202px">950554513</div>
<div class="a" style="left:255px;top:552px;width:1074px;height:27px;background:#fff;border-bottom:1px solid #e3e3e3"></div>
<div class="cb" style="left:410px;top:557px;border-radius:1px;border-color:#7a7a7a"></div><div class="cb" style="left:450px;top:557px"></div><svg style="left:451px;top:558px" width="11" height="11" viewBox="0 0 11 11"><path d="M2.4 5.8L4.5 8.3L8.6 2.2" fill="none" stroke="#000" stroke-width="1.7"/></svg>
<div class="t" style="left:259.00px;top:559.50px;font-size:13px;line-height:13px;color:#1515c0;letter-spacing:0.203px">0007</div>
<div class="t" style="left:489.00px;top:559.50px;font-size:13px;line-height:13px;color:#1515c0;letter-spacing:0.153px">B04239893</div>
<div class="t" style="left:639.00px;top:559.50px;font-size:13px;line-height:13px;color:#1515c0;letter-spacing:-0.486px;word-spacing:0.252px">AGRICOLA CHORROH</div>
<div class="t" style="left:768.73px;top:559.50px;font-size:13px;line-height:13px;color:#222;letter-spacing:-2.603px">…</div>
<div class="t" style="left:789.00px;top:559.50px;font-size:13px;line-height:13px;color:#222;letter-spacing:-0.314px;word-spacing:0.080px">C/. SILENCIO, 12</div>
<div class="t" style="left:939.00px;top:559.50px;font-size:13px;line-height:13px;color:#222;letter-spacing:0.202px">04740</div>
<div class="t" style="left:1089.00px;top:559.50px;font-size:13px;line-height:13px;color:#222;letter-spacing:0.202px">950320437</div>
<div class="a" style="left:255px;top:579px;width:1074px;height:27px;background:#f6f6f6;border-bottom:1px solid #e3e3e3"></div>
<div class="cb" style="left:410px;top:584px;border-radius:1px;border-color:#7a7a7a"></div><div class="cb" style="left:450px;top:584px"></div><svg style="left:451px;top:585px" width="11" height="11" viewBox="0 0 11 11"><path d="M2.4 5.8L4.5 8.3L8.6 2.2" fill="none" stroke="#000" stroke-width="1.7"/></svg>
<div class="t" style="left:259.00px;top:586.50px;font-size:13px;line-height:13px;color:#1515c0;letter-spacing:0.203px">0008</div>
<div class="t" style="left:489.00px;top:586.50px;font-size:13px;line-height:13px;color:#1515c0;letter-spacing:0.153px">B04286514</div>
<div class="t" style="left:639.00px;top:586.50px;font-size:13px;line-height:13px;color:#1515c0;letter-spacing:-0.554px;word-spacing:0.320px">AGRICOLA DARRICAL,</div>
<div class="t" style="left:768.79px;top:586.50px;font-size:13px;line-height:13px;color:#222;letter-spacing:-2.603px">…</div>
<div class="t" style="left:789.00px;top:586.50px;font-size:13px;line-height:13px;color:#222;letter-spacing:-0.744px;word-spacing:0.510px">C/. ESTRELLA DEL SU…</div>
<div class="t" style="left:939.00px;top:586.50px;font-size:13px;line-height:13px;color:#222;letter-spacing:0.202px">04717</div>
<div class="a" style="left:255px;top:606px;width:1074px;height:2px;background:#fff"></div>
<div class="a" style="left:1329px;top:336px;width:12px;height:272px;background:#e8e8e8"></div>
<div class="a" style="left:1329px;top:348px;width:12px;height:25px;background:#b6b6b6"></div>
<svg style="left:1331px;top:338px" width="8" height="6" viewBox="0 0 8 6"><path d="M1 4.5L4 1.5L7 4.5" fill="none" stroke="#8a8a8a" stroke-width="1.2"/></svg>
<svg style="left:1331px;top:599px" width="8" height="6" viewBox="0 0 8 6"><path d="M1 1.5L4 4.5L7 1.5" fill="none" stroke="#8a8a8a" stroke-width="1.2"/></svg>
<div class="a" style="left:255px;top:608px;width:1086px;height:12px;background:#e6e6e6"></div>
<div class="a" style="left:267px;top:608px;width:630px;height:12px;background:#b8b8b8"></div>
<svg style="left:257px;top:610px" width="6" height="8" viewBox="0 0 6 8"><path d="M4.5 1L1.5 4L4.5 7" fill="none" stroke="#8a8a8a" stroke-width="1.2"/></svg>
<svg style="left:1320px;top:610px" width="6" height="8" viewBox="0 0 6 8"><path d="M1.5 1L4.5 4L1.5 7" fill="none" stroke="#8a8a8a" stroke-width="1.2"/></svg>
<div class="a" style="left:255px;top:620px;width:1086px;height:26px;background:#eef6fe;border-top:1px solid #bcd9f5;border-bottom:1px solid #bcd9f5"></div>
<svg style="left:1241px;top:626px" width="13" height="15" viewBox="0 0 13 15"><defs><linearGradient id="fg" x1="0" x2="1"><stop offset="0" stop-color="#6f6f6f"/><stop offset=".5" stop-color="#d8d8d8"/><stop offset="1" stop-color="#7a7a7a"/></linearGradient></defs><path d="M0.3 0.5H12.7V1.8L7.8 7V14.2Q6.5 15 5.2 14.2V7L0.3 1.8Z" fill="url(#fg)" stroke="#666" stroke-width="0.6"/></svg>
<div class="t" style="left:1258.30px;top:627.00px;font-size:13px;line-height:13px;color:#1a7dd6;font-weight:bold;letter-spacing:0.652px;word-spacing:-0.886px">editar filtro</div>
<div class="a" style="left:255px;top:648px;width:1086px;height:29px;background:#f0f0f0;border-top:1px solid #d9d9d9;border-bottom:1px solid #d9d9d9"></div>
<div class="a" style="left:260px;top:652px;width:65px;height:21px;background:#fff;border:1px solid #b5b5b5"></div>
<svg style="left:308px;top:659px" width="12" height="7" viewBox="0 0 12 7"><path d="M1 1L6 6L11 1" fill="none" stroke="#555" stroke-width="1.1"/></svg>
<div class="a" style="left:437px;top:652px;width:54px;height:21px;background:#fff;border:1px solid #c5c5c5"></div>
<svg style="left:341px;top:655px" width="12" height="14" viewBox="0 0 12 14"><defs><linearGradient id="bg1" x1="0" x2="0" y1="0" y2="1"><stop offset="0" stop-color="#6aa0f0"/><stop offset="1" stop-color="#1d4fb8"/></linearGradient></defs><rect x="1" y="1" width="3" height="12" fill="url(#bg1)"/><path d="M11 1V12.5L4.5 6.8Z" fill="url(#bg1)"/></svg>
<svg style="left:364px;top:655px" width="8" height="13" viewBox="0 0 8 13"><path d="M7 1V12L1 6.5Z" fill="url(#bg1)"/></svg>
<svg style="left:536px;top:655px" width="8" height="13" viewBox="0 0 8 13"><path d="M1 1V12L7 6.5Z" fill="url(#bg1)"/></svg>
<svg style="left:555px;top:655px" width="12" height="14" viewBox="0 0 12 14"><path d="M1 1V12.5L7.5 6.8Z" fill="url(#bg1)"/><rect x="8" y="1" width="3" height="12" fill="url(#bg1)"/></svg>
<svg style="left:584px;top:653px" width="18" height="18" viewBox="0 0 18 18"><g fill="none" stroke="#5cb85c" stroke-width="2.6"><path d="M2.5 8.5Q4 4 9 4H12"/><path d="M15.5 9.5Q14 14 9 14H6"/></g><path d="M11 0.5L16 4L11 7.5Z" fill="#5cb85c"/><path d="M7 10.5L2 14L7 17.5Z" fill="#4a9a4a"/></svg>
<div class="t" style="left:266.00px;top:656.50px;font-size:13px;line-height:13px;color:#333;letter-spacing:0.199px">100</div>
<div class="t" style="left:393.40px;top:657.00px;font-size:13px;line-height:13px;color:#222;letter-spacing:0.032px">Página</div>
<div class="t" style="left:441.50px;top:657.00px;font-size:13px;line-height:13px;color:#333;letter-spacing:0.199px">1</div>
<div class="t" style="left:494.00px;top:657.00px;font-size:13px;line-height:13px;color:#222;letter-spacing:0.521px;word-spacing:-0.755px">/ 74</div>
<div class="t" style="left:613.90px;top:655.20px;font-size:13px;line-height:13px;color:#111;letter-spacing:0.393px;word-spacing:-0.627px">Mostrando 1 de 100 de 7381 registros totales</div>
<div class="a" style="left:390px;top:228px;width:120px;height:101px;background:#588fbe"></div>
<div class="t" style="left:397.50px;top:235.00px;font-size:13px;line-height:13px;color:#fff;letter-spacing:0.674px">Todo</div>
<div class="t" style="left:397.50px;top:260.00px;font-size:13px;line-height:13px;color:#fff;letter-spacing:0.050px;word-spacing:-0.284px">Nº Socio</div>
<div class="t" style="left:397.50px;top:285.00px;font-size:13px;line-height:13px;color:#fff;letter-spacing:0.376px">Identificación</div>
<div class="t" style="left:397.50px;top:309.00px;font-size:13px;line-height:13px;color:#fff;letter-spacing:0.553px;word-spacing:-0.787px">Nombre Corto</div>
<div class="a" style="left:230px;top:702px;width:1136px;height:26px;background:#fff;border-top:1px solid #d2d6de"></div><div class="t" style="left:245.50px;top:710.00px;font-size:13px;line-height:13px;color:#444;font-weight:bold;letter-spacing:0.143px;word-spacing:-0.377px">Copyright (c) 2017.</div>
<div class="t" style="left:367.50px;top:710.00px;font-size:13px;line-height:13px;color:#444;letter-spacing:0.302px;word-spacing:-0.536px">Todos los derechos reservados.</div>
<div class="t" style="left:1294.00px;top:710.00px;font-size:13px;line-height:13px;color:#444;letter-spacing:-0.045px;word-spacing:-0.189px">qazaba TI</div>
</body></html>
